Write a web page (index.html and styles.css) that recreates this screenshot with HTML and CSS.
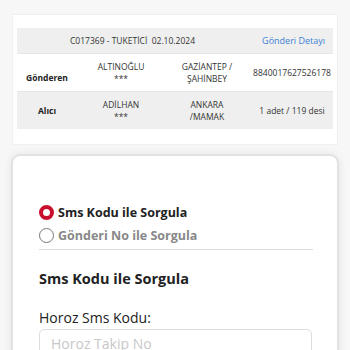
FILE: index.html
```
<!DOCTYPE html>
<html lang="tr">
<head>
<meta charset="utf-8">
<link rel="stylesheet" href="styles.css">
</head>
<body>
<div class="page">
  <div class="top-card">
    <div class="table">
      <div class="row head">
        <div class="head-info">C017369 - TUKETİCİ&nbsp; 02.10.2024</div>
        <div class="head-link">Gönderi Detayı</div>
      </div>
      <div class="row r1">
        <div class="cell label lbl-low">Gönderen</div>
        <div class="cell">ALTINOĞLU<br>***</div>
        <div class="cell">GAZİANTEP /<br>ŞAHİNBEY</div>
        <div class="cell">8840017627526178</div>
      </div>
      <div class="row r2">
        <div class="cell label">Alıcı</div>
        <div class="cell">ADİLHAN<br>***</div>
        <div class="cell">ANKARA<br>/MAMAK</div>
        <div class="cell">1 adet / 119 desi</div>
      </div>
    </div>
  </div>

  <div class="query-card">
    <div class="options">
      <label class="opt active"><span class="radio on"></span>Sms Kodu ile Sorgula</label>
      <label class="opt"><span class="radio"></span>Gönderi No ile Sorgula</label>
    </div>
    <h2 class="title">Sms Kodu ile Sorgula</h2>
    <div class="field-label">Horoz Sms Kodu:</div>
    <div class="input">Horoz Takip No</div>
  </div>
</div>
</body>
</html>
```
FILE: styles.css
```
* { box-sizing: border-box; }
html, body { margin: 0; padding: 0; }
body {
  background: #f7f7f7;
  font-family: "Open Sans", "DejaVu Sans", sans-serif;
  color: #222;
  width: 350px;
  height: 350px;
  overflow: hidden;
}
.page { padding-top: 14px; }
.top-card {
  margin: 0 12px;
  background: #fff;
  border: 1px solid #f0f0f0;
  padding: 13px 4px 15px;
}
.table { display: flex; flex-direction: column; }
.row { display: grid; grid-template-columns: 60px 88px 84px 86px; align-items: center; }
.head {
  display: flex;
  height: 26px;
  background: #efefef;
  align-items: center;
  font-size: 8.5px;
  color: #333;
  border-bottom: 1px solid #e6e6e6;
}
.head-info { flex: 1; padding-left: 53px; }
.head-link { color: #3d7fd6; padding-right: 8px; font-size: 9px; }
.r1 { height: 38px; background: #fff; border-bottom: 1px solid #e6e6e6; }
.r2 { height: 37px; background: #efefef; }
.cell {
  text-align: center;
  font-size: 8.5px;
  line-height: 11.5px;
  color: #333;
}
.label { font-weight: 700; color: #222; }
.lbl-low { padding-top: 11px; }

.query-card {
  margin: 9px 11px 0;
  background: #fff;
  border: 2px solid #e2e2e2;
  border-radius: 9px;
  box-shadow: 0 0 8px rgba(0,0,0,0.08);
  padding: 45px 26px 0;
  height: 260px;
}
.options {
  border-bottom: 1px solid #dcdcdc;
  padding-bottom: 2px;
  width: 274px;
}
.opt {
  display: flex;
  align-items: center;
  gap: 4px;
  font-size: 12.5px;
  font-weight: 700;
  color: #888;
  height: 23px;
}
.opt.active { color: #222; }
.radio {
  width: 15px;
  height: 15px;
  border-radius: 50%;
  border: 1.5px solid #777;
  background: #fff;
  flex: none;
}
.radio.on {
  border: 4px solid #c8102e;
  background: #fff;
}
.title {
  margin: 19px 0 0;
  font-size: 14.5px;
  font-weight: 700;
  color: #222;
}
.field-label {
  margin-top: 20px;
  font-size: 14px;
  color: #222;
}
.input {
  margin-top: 2px;
  width: 273px;
  height: 36px;
  border: 1px solid #dedede;
  border-radius: 5px;
  padding: 4px 11px;
  font-size: 14px;
  color: #c8c8c8;
}
```
